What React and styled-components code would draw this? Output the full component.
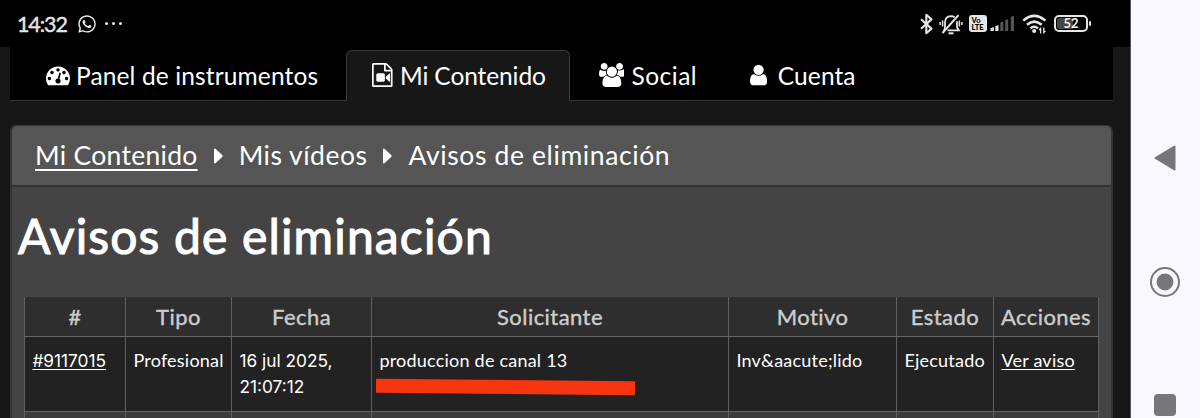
import styled, { createGlobalStyle } from "styled-components";
import { FaWhatsapp } from "react-icons/fa";

const GlobalStyle = createGlobalStyle`
* {
    box-sizing: border-box;
}
body {
    margin: 0;
    background: #171717;
    color: #fff;
    font-family: Lato, "Open Sans", sans-serif;
}
`;

const columns = ["#", "Tipo", "Fecha", "Solicitante", "Motivo", "Estado", "Acciones"];

// Menu icons share a 1792 unit em, so every glyph is drawn at the same scale
const glyphs = {
    dashboard: {
        box: "0 0 1792 1792",
        path: "M384 1152q0-53-37.5-90.5t-90.5-37.5-90.5 37.5-37.5 90.5 37.5 90.5 90.5 37.5 90.5-37.5 37.5-90.5zm192-448q0-53-37.5-90.5t-90.5-37.5-90.5 37.5-37.5 90.5 37.5 90.5 90.5 37.5 90.5-37.5 37.5-90.5zm428 481l101-382q6-26-7.5-48.5t-38.5-29.5-48 6.5-30 39.5l-101 382q-60 5-107 43.5t-63 98.5q-20 77 20 146t117 89 146-20 89-117q16-60-6-117t-72-91zm660-33q0-53-37.5-90.5t-90.5-37.5-90.5 37.5-37.5 90.5 37.5 90.5 90.5 37.5 90.5-37.5 37.5-90.5zm-640-640q0-53-37.5-90.5t-90.5-37.5-90.5 37.5-37.5 90.5 37.5 90.5 90.5 37.5 90.5-37.5 37.5-90.5zm448 192q0-53-37.5-90.5t-90.5-37.5-90.5 37.5-37.5 90.5 37.5 90.5 90.5 37.5 90.5-37.5 37.5-90.5zm320 448q0 261-141 483-19 29-54 29h-1402q-35 0-54-29-141-221-141-483 0-182 71-348t191-286 286-191 348-71 348 71 286 191 191 286 71 348z",
    },
    video: {
        box: "128 0 1536 1792",
        path: "M1596 380q28 28 48 76t20 88v1152q0 40-28 68t-68 28h-1344q-40 0-68-28t-28-68v-1600q0-40 28-68t68-28h896q40 0 88 20t76 48zm-444-244v376h376q-10-29-22-41l-313-313q-12-12-41-22zm384 1528v-1024h-416q-40 0-68-28t-28-68v-416h-768v1536h1280zm-576-896q52 0 90 38t38 90v384q0 52-38 90t-90 38h-384q-52 0-90-38t-38-90v-384q0-52 38-90t90-38h384zm492 2q20 8 20 30v576q0 22-20 30-8 2-12 2-14 0-23-9l-265-266v-90l265-266q9-9 23-9 4 0 12 2z",
    },
    users: {
        box: "0 0 1920 1792",
        path: "M593 896q-162 5-265 128h-134q-82 0-138-40.5t-56-118.5q0-353 124-353 6 0 43.5 21t97.5 42.5 119 21.5q67 0 133-23-5 37-5 66 0 159 93 293zm1071 637q0 120-73 189.5t-194 69.5h-874q-121 0-194-69.5t-73-189.5q0-53 3.5-103.5t14-109 26.5-108.5 43-97.5 62-81 85.5-53.5 111.5-20q10 0 43 21.5t73 48 107 48 135 21.5 135-21.5 107-48 73-48 43-21.5q61 0 111.5 20t85.5 53.5 62 81 43 97.5 26.5 108.5 14 109 3.5 103.5zm-1024-1277q0 106-75 181t-181 75-181-75-75-181 75-181 181-75 181 75 75 181zm704 384q0 159-112.5 271.5t-271.5 112.5-271.5-112.5-112.5-271.5 112.5-271.5 271.5-112.5 271.5 112.5 112.5 271.5zm576 225q0 78-56 118.5t-138 40.5h-134q-103-123-265-128 93-134 93-293 0-29-5-66 66 23 133 23 59 0 119-21.5t97.5-42.5 43.5-21q124 0 124 353zm-128-609q0 106-75 181t-181 75-181-75-75-181 75-181 181-75 181 75 75 181z",
    },
    user: {
        box: "0 0 1280 1792",
        path: "M1280 1399q0 109-62.5 187t-150.5 78h-854q-88 0-150.5-78t-62.5-187q0-85 8.5-160.5t31.5-152 58.5-131 94-89 134.5-34.5q131 128 313 128t313-128q76 0 134.5 34.5t94 89 58.5 131 31.5 152 8.5 160.5zm-256-887q0 159-112.5 271.5t-271.5 112.5-271.5-112.5-112.5-271.5 112.5-271.5 271.5-112.5 271.5 112.5 112.5 271.5z",
    },
};

const Glyph = ({ name }) => (
    <GlyphSvg viewBox={glyphs[name].box}>
        <path d={glyphs[name].path} />
    </GlyphSvg>
);

const StatusIcons = () => (
    <StatusGroup>
        <svg width="13" height="22" viewBox="0 0 13 22" fill="none" stroke="#e6e6e6" strokeWidth="2.1">
            <path d="M1 6.2 11.5 15.6 6.3 20.2V1.8L11.5 6.4 1 15.8" strokeLinejoin="round" />
        </svg>
        <svg width="24" height="22" viewBox="0 0 24 22" fill="none" stroke="#e6e6e6" strokeWidth="1.8">
            <path d="M6 14.5V9.5Q6 3.6 12 3.2Q14.2 3.3 15.6 4.3M18 8.2V14.2L19.8 17.4H8.6M4.2 17.4H5.4L6 14.5" />
            <path d="M3.5 20 19.5 2.2" strokeWidth="2" />
            <path d="M9.5 20.3H14.5" strokeWidth="2" />
            <path d="M3.6 7.5V13.5M1.1 9V12M20.4 7.5V13.5M22.9 9V12" strokeWidth="1.5" />
        </svg>
        <VoLte>
            <span>Vo</span>
            <span>LTE</span>
        </VoLte>
        <svg width="25" height="17" viewBox="0 0 25 17">
            <path fill="#e6e6e6" d="M0.5 13.2 3.8 12V16H0.5zM5.3 11.2 8.5 10V16H5.3z" />
            <path fill="#555" d="M10.3 7.6 13.4 6.4V16H10.3zM15.2 5.2 18.2 4V16H15.2zM20.8 2 24 .6V16H20.8z" />
        </svg>
        <svg width="25" height="20" viewBox="0 0 25 20" fill="none" stroke="#e6e6e6" strokeWidth="2.5">
            <path d="M1.3 6.6Q12.2-2.8 23.3 6.6M5 10.8Q12.2 4.4 19.7 10.8M8.4 14.4Q12.2 11 16 14.4" />
            <circle cx="12.2" cy="17" r="1.1" strokeWidth="2" />
            <path d="M18.6 19.4V14.5L17.2 16M21.8 13.6V18.5L23.3 17" strokeWidth="1.3" />
        </svg>
        <Battery>52</Battery>
    </StatusGroup>
);

const Caret = () => (
    <svg width="9" height="16" viewBox="0 0 9 16">
        <path fill="#fff" d="M0 1.2Q.3 0 1.4.7L8.4 7.3Q9 8 8.4 8.7L1.4 15.3Q.3 16 0 14.8z" />
    </svg>
);

const App = () => {
    return (
        <Device>
            <GlobalStyle />
            <Phone>
                <StatusBar>
                    <Clock>14:32</Clock>
                    <FaWhatsapp size={20} color="#e6e6e6" />
                    <Dots>
                        <i />
                        <i />
                        <i />
                    </Dots>
                    <StatusIcons />
                </StatusBar>
                <Page>
                    <Tabs>
                        <Tab $track={0.13}>
                            <Glyph name="dashboard" />
                            <span>Panel de instrumentos</span>
                        </Tab>
                        <Tab $active $track={-0.1} $gap={7}>
                            <Glyph name="video" />
                            <span>Mi Contenido</span>
                        </Tab>
                        <Tab $track={0.5} $gap={7}>
                            <Glyph name="users" />
                            <span>Social</span>
                        </Tab>
                        <Tab $track={0.1} $gap={10.5}>
                            <Glyph name="user" />
                            <span>Cuenta</span>
                        </Tab>
                    </Tabs>
                    <Panel>
                        <Breadcrumb>
                            <Crumb as="a" $link $track={0.3}>Mi Contenido</Crumb>
                            <Caret />
                            <Crumb $track={0.5}>Mis vídeos</Crumb>
                            <Caret />
                            <Crumb $track={0.62}>Avisos de eliminación</Crumb>
                        </Breadcrumb>
                        <Title>Avisos de eliminación</Title>
                        <Table>
                            {columns.map((name) => <HeadCell key={name}>{name}</HeadCell>)}
                            <Cell $numeric><Link>#9117015</Link></Cell>
                            <Cell>Profesional</Cell>
                            <Cell $numeric>16 jul 2025,<br />21:07:12</Cell>
                            <Cell>
                                produccion de canal 13
                                <Marker />
                            </Cell>
                            <Cell>Inv&amp;aacute;lido</Cell>
                            <Cell>Ejecutado</Cell>
                            <Cell><Link>Ver aviso</Link></Cell>
                            {columns.map((name) => <NextCell key={name} />)}
                        </Table>
                    </Panel>
                </Page>
            </Phone>
            <NavBar>
                <svg width="22" height="26" viewBox="0 0 22 26">
                    <path fill="#77777a" stroke="#77777a" strokeWidth="2" strokeLinejoin="round" d="M1.5 13 20.5 1.5V24.5z" />
                </svg>
                <svg width="30" height="30" viewBox="0 0 30 30">
                    <circle cx="15" cy="15" r="14" fill="none" stroke="#77777a" strokeWidth="2" />
                    <circle cx="15" cy="15" r="8.4" fill="#77777a" />
                </svg>
                <Square />
            </NavBar>
        </Device>
    );
};

const Device = styled.div`
display: flex;
width: 1200px;
height: 418px;
overflow: hidden;
`;

const Phone = styled.div`
display: flex;
flex-direction: column;
width: 1131px;
border-right: 1px solid #555;
`;

const StatusBar = styled.div`
display: flex;
flex: 0 0 47px;
align-items: center;
padding: 0 39px 0 17px;
background: #000;
`;

const Clock = styled.span`
width: 60px;
color: #e6e6e6;
font-size: 21.5px;
letter-spacing: -1.1px;
-webkit-text-stroke: 0.4px #e6e6e6;
`;

const Dots = styled.span`
display: flex;
gap: 4px;
margin-left: 8px;

i {
    width: 3px;
    height: 3px;
    border-radius: 50%;
    background: #e6e6e6;
}
`;

const StatusGroup = styled.div`
display: flex;
align-items: center;
gap: 6.5px;
margin-left: auto;

svg:nth-child(4) {
    margin: 0 0 0 -3px;
}
`;

const VoLte = styled.span`
display: flex;
flex-direction: column;
align-items: center;
justify-content: center;
width: 18px;
height: 17px;
margin-left: -1px;
border-radius: 3px;
background: #e6e6e6;
color: #000;
font-size: 7.5px;
font-weight: 900;
line-height: 7px;

span:first-child {
    align-self: flex-start;
    margin-left: 3px;
}
`;

const Battery = styled.span`
position: relative;
width: 34px;
height: 17px;
margin: 0 3px 0 1px;
border: 2px solid #e6e6e6;
border-radius: 5px;
background: linear-gradient(90deg, #444 0 16px, #000 16px) content-box;
padding: 1px;
color: #f2f2f2;
font-size: 13px;
font-weight: 700;
line-height: 11px;
text-align: center;

&::after {
    content: "";
    position: absolute;
    top: 4px;
    right: -5px;
    width: 2px;
    height: 5px;
    border-radius: 1px;
    background: #e6e6e6;
}
`;

const Page = styled.div`
display: flex;
flex: 1;
flex-direction: column;
min-height: 0;
padding: 0 17px 0 10px;
`;

const Tabs = styled.nav`
display: grid;
grid-template-columns: 324px 224px 149px 160px;
flex: 0 0 54px;
column-gap: 2.4px;
padding: 3px 0 0 10px;
background: linear-gradient(#333, #333) bottom / 100% 1px no-repeat, #000;
`;

const Tab = styled.a`
display: flex;
align-items: center;
gap: ${p => p.$gap || 6}px;
padding: 0 0 0 25px;
border: 1px solid ${p => p.$active ? "#3a3a3a" : "transparent"};
border-bottom: 0;
border-radius: 6px 6px 0 0;
background: ${p => p.$active ? "#171717" : "none"};
font-size: 24.5px;
letter-spacing: ${p => p.$track}px;
white-space: nowrap;

span {
    padding-bottom: 2px;
}
`;

const GlyphSvg = styled.svg`
flex: none;
height: 24px;
fill: #fff;
margin-bottom: 2px;
`;

const Panel = styled.main`
display: flex;
flex: none;
flex-direction: column;
height: 320px;
margin-top: 24px;
border: 2px solid #343434;
border-top-width: 1px;
border-radius: 6px 6px 0 0;
background: #444;
`;

const Breadcrumb = styled.div`
display: flex;
align-items: center;
gap: 16px;
height: 61px;
padding-left: 23px;
border-bottom: 2px solid #333;
border-radius: 5px 5px 0 0;
background: #555;
`;

const Crumb = styled.span`
padding-bottom: 2px;
font-size: 26.5px;
letter-spacing: ${p => p.$track}px;
text-decoration: ${p => p.$link ? "underline" : "none"};
text-decoration-thickness: 2px;
text-underline-offset: 4px;
white-space: nowrap;
`;

const Title = styled.h1`
margin: 18px 0 31px 6px;
font-size: 48px;
font-weight: 400;
line-height: 61px;
letter-spacing: 1.15px;
-webkit-text-stroke: 1.1px #fff;
`;

const Table = styled.div`
display: grid;
grid-template-columns: 101px 106px 140px 357px 168px 97px 106px;
grid-template-rows: 40px 75px 20px;
width: 1075px;
margin-left: 12px;
`;

const BaseCell = styled.div`
border-left: 1px solid #606060;
border-bottom: 1px solid #666;

&:nth-child(7n) {
    border-right: 1px solid #606060;
}
`;

const HeadCell = styled(BaseCell)`
display: flex;
align-items: center;
justify-content: center;
padding-bottom: 1px;
background: #2e2e2e;
color: #ccc;
font-size: 22px;
letter-spacing: 0.45px;
-webkit-text-stroke: 0.4px #ccc;
`;

const Cell = styled(BaseCell)`
padding: ${p => p.$numeric ? 11 : 10}px 0 0 7.4px;
background: #222;
font-family: ${p => p.$numeric ? "Inter" : "Lato"}, sans-serif;
font-size: ${p => p.$numeric ? 17.3 : 18}px;
letter-spacing: ${p => p.$numeric ? 0 : 0.22}px;
line-height: 26px;
white-space: nowrap;
`;

const NextCell = styled(BaseCell)`
background: #3b3b3b;
`;

const Link = styled.a`
text-decoration: underline;
text-decoration-thickness: 1px;
text-underline-offset: 2px;
`;

// Stroke drawn over the second line of the applicant's name
const Marker = styled.div`
width: 259px;
height: 14px;
margin: 7px 0 0 -3px;
background: #f73511;
transform: rotate(0.6deg);
`;

const NavBar = styled.aside`
display: flex;
flex: 1;
flex-direction: column;
align-items: center;
gap: 96px;
padding: 145px 2px 0 0;
background: #faf8ff;
`;

const Square = styled.span`
width: 22px;
height: 22px;
flex: none;
margin-top: 1px;
border-radius: 4px;
background: #77777a;
`;

export default App;
